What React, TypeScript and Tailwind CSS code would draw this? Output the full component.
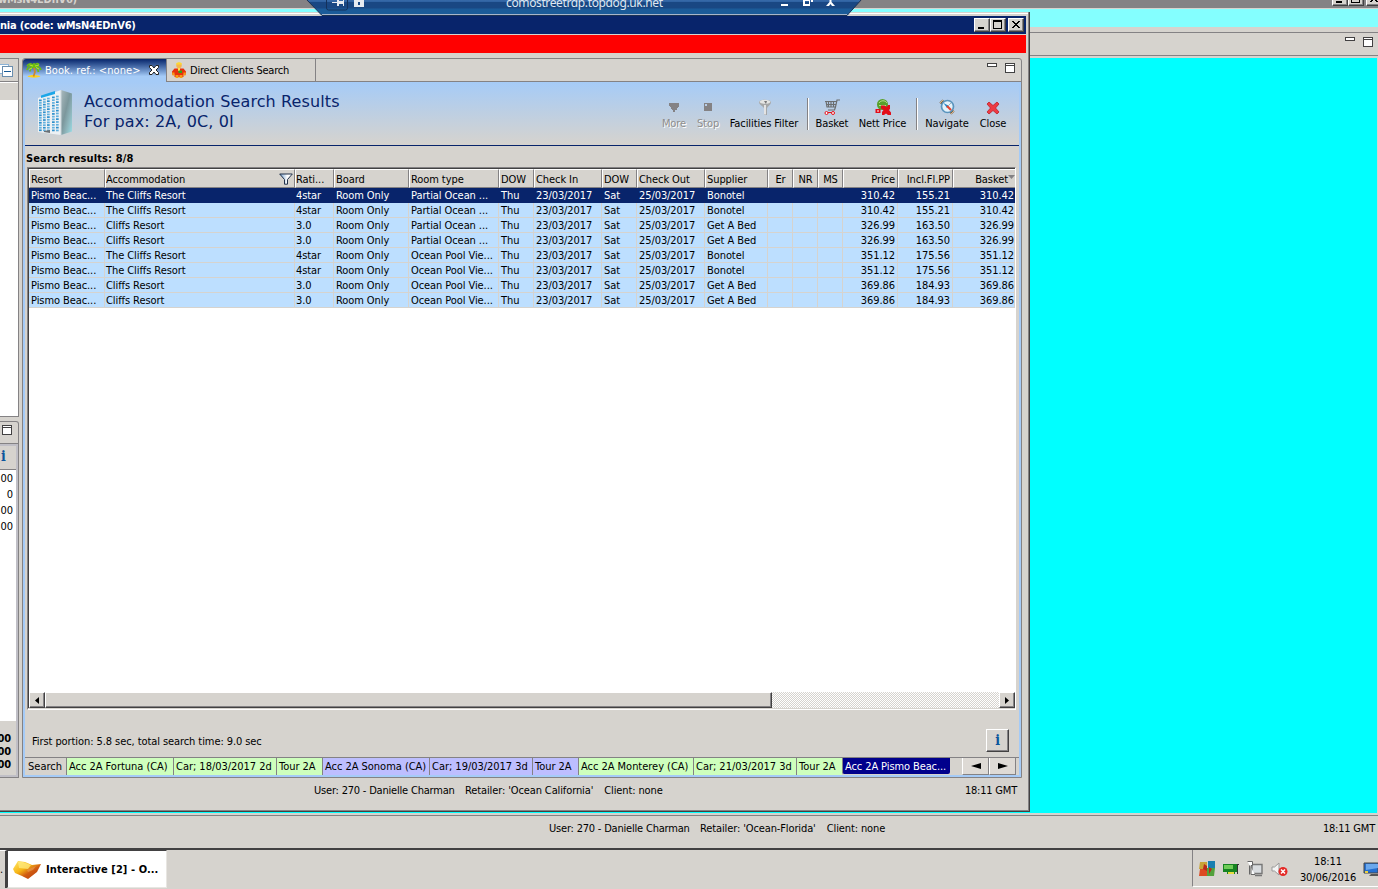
import type { ReactNode } from "react";

const TONE = {
  raised: "border border-t-white border-l-white border-r-[#424142] border-b-[#424142] bg-[#d6d3ce] shadow-[inset_-1px_-1px_0_#848284]",
};

type Column = { label: string; width: string; align?: string; icon?: ReactNode };

function Funnel() {
  return (
    <svg width="14" height="12" viewBox="0 0 14 12" className="-mt-0.5 shrink-0">
      <defs>
        <linearGradient id="fn" x1="0" x2="1">
          <stop offset="0" stopColor="#6f9ccc" />
          <stop offset="0.6" stopColor="#fff" />
        </linearGradient>
      </defs>
      <path d="M.7 1h12.6L8.5 6.5v4.7h-3V6.5z" fill="url(#fn)" stroke="#21304a" />
    </svg>
  );
}

const COLUMNS: Column[] = [
  { label: "Resort", width: "w-[76px]" },
  { label: "Accommodation", width: "w-[190px]", icon: <Funnel /> },
  { label: "Rati...", width: "w-[39px]" },
  { label: "Board", width: "w-[75px]" },
  { label: "Room type", width: "w-[90px]" },
  { label: "DOW", width: "w-[35px]" },
  { label: "Check In", width: "w-[68px]" },
  { label: "DOW", width: "w-[35px]" },
  { label: "Check Out", width: "w-[68px]" },
  { label: "Supplier", width: "w-[63px]" },
  { label: "Er", width: "w-[25px]", align: "justify-center" },
  { label: "NR", width: "w-[25px]", align: "justify-center" },
  { label: "MS", width: "w-[25px]", align: "justify-center" },
  { label: "Price", width: "w-[55px]", align: "justify-end" },
  { label: "Incl.Fl.PP", width: "w-[55px]", align: "justify-end" },
  { label: "Basket", width: "w-[62px]", align: "justify-end" },
];

const row = (hotel: string, rating: string, room: string, supplier: string, price: string, pp: string) => [
  "Pismo Beac...", hotel, rating, "Room Only", room, "Thu", "23/03/2017", "Sat", "25/03/2017", supplier, "", "", "", price, pp, price,
];

const ROWS = [
  row("The Cliffs Resort", "4star", "Partial Ocean ...", "Bonotel", "310.42", "155.21"),
  row("The Cliffs Resort", "4star", "Partial Ocean ...", "Bonotel", "310.42", "155.21"),
  row("Cliffs Resort", "3.0", "Partial Ocean ...", "Get A Bed", "326.99", "163.50"),
  row("Cliffs Resort", "3.0", "Partial Ocean ...", "Get A Bed", "326.99", "163.50"),
  row("The Cliffs Resort", "4star", "Ocean Pool Vie...", "Bonotel", "351.12", "175.56"),
  row("The Cliffs Resort", "4star", "Ocean Pool Vie...", "Bonotel", "351.12", "175.56"),
  row("Cliffs Resort", "3.0", "Ocean Pool Vie...", "Get A Bed", "369.86", "184.93"),
  row("Cliffs Resort", "3.0", "Ocean Pool Vie...", "Get A Bed", "369.86", "184.93"),
];

const PAGE_TABS = [
  { label: "Search", style: "w-[41px] bg-[#d6d3ce]" },
  { label: "Acc 2A Fortuna (CA)", style: "w-[107px] bg-[#ceffbd]" },
  { label: "Car; 18/03/2017 2d", style: "w-[103px] bg-[#ceffbd]" },
  { label: "Tour 2A", style: "w-[46px] bg-[#ceffbd]" },
  { label: "Acc 2A Sonoma (CA)", style: "w-[107px] bg-[#bdbeff]" },
  { label: "Car; 19/03/2017 3d", style: "w-[103px] bg-[#bdbeff]" },
  { label: "Tour 2A", style: "w-[46px] bg-[#bdbeff]" },
  { label: "Acc 2A Monterey (CA)", style: "w-[115px] bg-[#ceffbd]" },
  { label: "Car; 21/03/2017 3d", style: "w-[103px] bg-[#ceffbd]" },
  { label: "Tour 2A", style: "w-[46px] bg-[#ceffbd]" },
];

function MinMax() {
  return (
    <svg width="28" height="12" viewBox="0 0 28 12" shapeRendering="crispEdges">
      <path d="M.5 1.5h9v3h-9zM18.500 1.500h9v9h-9zM18.500 3.500h9" fill="#fff" stroke="#424142" />
    </svg>
  );
}

function WinButton({ kind }: { kind: "min" | "max" | "close" }) {
  return (
    <div className={`flex h-[14px] w-4 items-center justify-center ${TONE.raised}`}>
      <svg width="12" height="10" viewBox="0 0 12 10" shapeRendering="crispEdges">
        {kind === "min" && <path d="M2 7h6v2H2z" />}
        {kind === "max" && <path d="M1 0h9v9H1zM2 2v6h7V2z" fillRule="evenodd" />}
        {kind === "close" && (
          <path d="M2 1h2v1h1v1h2V2h1V1h2v1H9v1H8v1H7v1h1v1h1v1h1v1H8V7H7V6H5v1H4v1H2V7h1V6h1V5h1V4H4V3H3V2H2z" />
        )}
      </svg>
    </div>
  );
}

function Palm() {
  return (
    <svg width="16" height="16" viewBox="0 0 16 16">
      <path d="M1.500 14.500c2-2 10-2 13 0-3 1.500-10 1.500-13 0z" fill="#ffd21a" />
      <path d="M8 5l1 5-1.500 4.500" stroke="#c98a33" strokeWidth="1.800" fill="none" />
      <path d="M8 5C6 1 3 1 1 4M8 5C5 3 2 4 1 8M8 5C5 5 4 7 4 9.500M8 5c1-4 4-4 5-2M8 5c4-2 6 0 7 3M8 5c3 0 4 2 4.500 5M8 5V1" stroke="#6cbc12" strokeWidth="1.700" fill="none" />
      <path d="M7 4L3.500 3M9 4l4-1M6 6L3 7.500M10 5.500l3 1.500" stroke="#b6ea2c" strokeWidth="1" />
    </svg>
  );
}

function Person() {
  return (
    <svg width="16" height="16" viewBox="0 0 16 16">
      <circle cx="8" cy="3.500" r="2.700" fill="#f7b64a" />
      <path d="M5 2.500c0-3 6-3 6 0z" fill="#ffd92e" />
      <path d="M3.500 6.500h9l2.500 3v3h-2.500V15h-9v-2.500H1v-3z" fill="#e7300c" />
      <path d="M7 6h2v3H7z" fill="#ffe14d" />
      <path d="M7.500 8.500h3.500v2.500H7.500z" fill="#31a221" />
      <path d="M1 10.500h2.500v3H1.500zM12.500 10.500H15l-.5 3h-2zM4.500 13h3v3h-3zM8.500 13h3v3h-3z" fill="#f79b18" />
    </svg>
  );
}

function Building() {
  const floors = Array.from({ length: 13 }, (_, i) => i);
  const bays = [2, 6, 10, 15, 19];
  return (
    <svg width="36" height="47" viewBox="0 0 36 47">
      <defs>
        <linearGradient id="side" x1="0" y1="0" x2="1" y2="1">
          <stop offset="0" stopColor="#aab9bd" />
          <stop offset="0.45" stopColor="#7c979c" />
          <stop offset="0.7" stopColor="#8fb6bc" />
          <stop offset="1" stopColor="#9adfe8" />
        </linearGradient>
      </defs>
      <path d="M24 1l11 3.500v38L24 46z" fill="url(#side)" />
      <path d="M1 9L24 1v45L1 43z" fill="#edf1f4" />
      <path d="M4 6.500l14-4.500v3L4 9z" fill="#1ba6e8" />
      {floors.map((i) =>
        bays.map((x, b) => (
          <rect key={`${i}-${b}`} x={x} y={11 - x * 0.23 + i * (2.45 + x * 0.02)} width="2.700" height="1.700" fill={(i + b) % 3 ? "#62b0de" : "#2d8fcb"} />
        )),
      )}
      <path d="M24 1v45" stroke="#cbd6dc" />
      <path d="M7 42l6-1v3l-6-1z" fill="#6a7075" />
    </svg>
  );
}

const ICONS: Record<string, ReactNode> = {
  More: <path d="M3 4h10v4h-1v1h-1v2H9v2H7v-2H6v-1H5V8H4V7H3z" fill="#848284" />,
  Stop: <path d="M4 4h8v8H4zM5 5v2h2V5z" fill="#848284" fillRule="evenodd" />,
  "Facilities Filter": (
    <>
      <path d="M3 3C4 0 14 0 15 3c0 3-3.500 4-4 6.500V16H8V9.500C7.500 7 3 6 3 3z" fill="#a5a7a8" />
      <ellipse cx="9" cy="2.800" rx="5.500" ry="2" fill="#e4e5e4" />
      <path d="M8 2h3l-1 3z" fill="#777" />
      <path d="M9 6v9.500" stroke="#f3f3f3" strokeWidth="1.600" />
    </>
  ),
  Basket: (
    <>
      <path d="M1 2.500h11.500M2 2l1 6h8.500L13 1h3M4.500 3v5M7 3v5M9.500 3v5M2.500 5.500h9.500M11.500 8l-1 3H4" stroke="#6b6d6e" fill="none" strokeWidth="1.200" />
      <circle cx="2.500" cy="14" r="1.500" fill="#fff" stroke="#e71019" />
      <circle cx="9" cy="14" r="1.500" fill="#fff" stroke="#e71019" />
      <path d="M4 13.500h3.500" stroke="#e71019" />
    </>
  ),
  "Nett Price": (
    <>
      <circle cx="7.500" cy="5.500" r="5.500" fill="#58a02a" />
      <path d="M4 4c2-3 6-3 8 0M4 6.500h7" stroke="#b5db8c" fill="none" />
      <path d="M.5 10h5v4h-5zM6 6.500h3.500l2 1.500L13 6h2v4l-1 1 2 2.500V16h-3l-2-1.500L9 16H7v-3l1.500-2L6 9.500z" fill="#e20d18" />
      <path d="M2 12h2" stroke="#fff" />
    </>
  ),
  Navigate: (
    <>
      <path d="M2 2l12 12" stroke="#7d6344" strokeWidth="4.500" />
      <path d="M1 4l3-3M12 15l3-3" stroke="#d9b98e" strokeWidth="1" />
      <circle cx="8.500" cy="7.500" r="6" fill="#e3f2fb" stroke="#5a94bd" strokeWidth="1.700" />
      <path d="M4.500 4l5.500 3-2 2z" fill="#1c83c6" />
      <path d="M8 7l4 4" stroke="#e7412c" strokeWidth="2.200" />
      <path d="M12 4L9 7" stroke="#9db4c2" />
    </>
  ),
  Close: <path d="M2 5l2-2 4 3.500L12 3l2 2-3.500 4 3.500 4-2 2-4-3.500L4 15l-2-2 3.500-4z" fill="#ee3b43" stroke="#bd2029" strokeWidth=".8" />,
};

function Tool({ label, width, disabled }: { label: string; width: string; disabled?: boolean }) {
  return (
    <div className={`flex shrink-0 flex-col items-center ${width}`}>
      <svg width="16" height="16" viewBox="0 0 16 16" className="mt-px">{ICONS[label]}</svg>
      <span className={`mt-[2px] h-[14px] leading-[14px] ${disabled ? "text-[#8e8d8c] [text-shadow:1px_1px_0_#fff]" : ""}`}>{label}</span>
    </div>
  );
}

function Separator() {
  return <div className="h-8 w-0.5 shrink-0 border-l border-[#848284] bg-white" />;
}

function InfoGlyph() {
  return <span className="font-['DejaVu_Serif'] text-[14px] font-bold leading-none text-[#0c559c]">i</span>;
}

function StatusLine({ retailer, className }: { retailer: string; className: string }) {
  return (
    <div className={`flex items-center tracking-[-0.200px] ${className}`}>
      <span className="w-[151px]">User: 270 - Danielle Charman</span>
      <span className="mr-[11px] tracking-[-0.120px]">Retailer: '{retailer}'</span>
      <span className="tracking-[-0.120px]">Client: none</span>
      <span className="ml-auto">18:11 GMT</span>
    </div>
  );
}

function ResultsTable() {
  return (
    <div className="mx-[2px] flex h-[543px] w-[989px] flex-col border border-b-white border-l-[#848284] border-r-white border-t-[#848284] bg-white">
      <div className="flex min-h-0 flex-1 flex-col overflow-hidden border-l border-t border-[#424142]">
        <div className="flex h-[19px] w-[987px] shrink-0 bg-[#d6d3ce]">
          {COLUMNS.map((c, i) => (
            <div
              key={i}
              className={`flex shrink-0 items-center overflow-hidden border-b border-l border-r border-t border-b-[#848284] border-l-white border-r-[#848284] border-t-white pt-[2px] ${i === 0 || i > 2 ? "pl-px" : "pl-0"} ${c.width} ${c.align ?? "justify-between"} ${i > 12 ? "pr-[2px]" : "pr-px"} ${i === 15 ? "!border-r-0 !pr-0" : ""}`}
            >
              <span>{c.label}</span>
              {c.icon}
              {i === 15 && (
                <svg width="7" height="5" viewBox="0 0 7 5" className="mb-1"><path d="M0 0h7L3.500 4z" fill="#848284" /></svg>
              )}
            </div>
          ))}
        </div>
        {ROWS.map((cells, r) => (
          <div key={r} className={`flex h-[15px] w-[987px] shrink-0 ${r === 0 ? "bg-[#08246b] text-white" : "bg-[#bddfff]"}`}>
            {cells.map((cell, i) => (
              <div
                key={i}
                className={`flex shrink-0 items-center overflow-hidden whitespace-nowrap ${i === 0 || i > 2 ? "pl-[2px]" : "pl-px"} ${COLUMNS[i].width} ${i > 12 ? "justify-end" : ""} ${i === 15 ? "pr-px" : "pr-[3px]"} ${r === 0 ? "" : "shadow-[inset_-1px_-1px_0_#d6d3ce]"}`}
              >
                {cell}
              </div>
            ))}
          </div>
        ))}
        <div className="flex-1" />
        <div className="flex h-4 w-[986px] shrink-0 bg-[repeating-conic-gradient(#fff_0_25%,#d6d3ce_0_50%)] bg-[length:2px_2px]">
          <div className={`flex w-4 items-center justify-center ${TONE.raised}`}>
            <svg width="4" height="7" viewBox="0 0 4 7"><path d="M4 0v7L0 3.500z" /></svg>
          </div>
          <div className={`w-[727px] ${TONE.raised}`} />
          <div className={`ml-auto flex w-4 items-center justify-center ${TONE.raised}`}>
            <svg width="4" height="7" viewBox="0 0 4 7"><path d="M0 0v7l4-3.500z" /></svg>
          </div>
        </div>
      </div>
      <div className="h-px shrink-0 bg-[#d6d3ce]" />
    </div>
  );
}

function Editor() {
  return (
    <div className="flex h-[720px] w-[1000px] flex-col rounded-t-[3px] border border-[#848284]">
      <div className="flex h-[23px] shrink-0">
        <div className="flex w-[143px] shrink-0 items-center rounded-tl-[3px] bg-linear-to-b from-[#08246b] to-[#a5cbf7] to-75% pb-px pl-[3px] text-white">
          <Palm />
          <span className="ml-[3px] mt-0.5 tracking-[0.060px]">Book. ref.: &lt;none&gt;</span>
          <svg width="12" height="12" viewBox="0 0 12 12" className="ml-auto mr-[6px]">
            <path d="M1.500 1.500h2.500l2 2.500 2-2.500h2.500v2l-2.500 2.500 2.500 2.500v2H8L6 8l-2 2.500H1.500v-2L4 6 1.500 3.500z" fill="#fff" stroke="#222" />
          </svg>
        </div>
        <div className="flex w-[150px] shrink-0 items-center border-x border-b border-[#848284] pl-[4px]">
          <Person />
          <span className="ml-[3px] mt-0.5 tracking-[-0.220px]">Direct Clients Search</span>
        </div>
        <div className="flex flex-1 items-start justify-end border-b border-[#848284] pr-[6px] pt-[3px]">
          <MinMax />
        </div>
      </div>
      <div className="flex min-h-0 flex-1 flex-col border-x-2 border-b-2 border-[#a5cbf7]">
        <div className="flex h-[64px] shrink-0 border-b border-[#08246b] bg-linear-to-b from-[#a5cbf7] via-[#becfe2] via-50% to-[#d6d3ce] pl-[12px] pt-[7px]">
          <Building />
          <div className="ml-[11px] mt-[3px] flex-1 whitespace-nowrap font-['DejaVu_Sans'] text-[16px] leading-[20px] tracking-[0.110px] text-[#08246b] [font-stretch:normal]">
            <div>Accommodation Search Results</div>
            <div>For pax: 2A, 0C, 0I</div>
          </div>
          <div className="flex pr-[9px] pt-[9px]">
            <Tool label="More" width="w-[34px]" disabled />
            <Tool label="Stop" width="w-[34px]" disabled />
            <Tool label="Facilities Filter" width="w-[78px]" />
            <div className="w-[4px]" />
            <Separator />
            <Tool label="Basket" width="w-[46px]" />
            <Tool label="Nett Price" width="w-[55px]" />
            <div className="w-[6px]" />
            <Separator />
            <Tool label="Navigate" width="w-[58px]" />
            <Tool label="Close" width="w-[34px]" />
          </div>
        </div>
        <div className="h-[21px] shrink-0 pl-px pt-[6px] font-bold leading-[14px] tracking-[0.130px]">Search results: 8/8</div>
        <ResultsTable />
        <div className="flex flex-1 items-center justify-between pl-[7px] pr-[10px] pt-[14px]">
          <span className="mt-[6px]">First portion: 5.8 sec, total search time: 9.0 sec</span>
          <div className={`mt-[2px] flex h-[23px] w-[23px] items-center justify-center ${TONE.raised}`}><InfoGlyph /></div>
        </div>
        <div className="mt-[3px] flex h-[18px] shrink-0 whitespace-nowrap border-t border-[#848284] leading-[17px] tracking-normal">
          {PAGE_TABS.map((t, i) => (
            <div key={i} className={`shrink-0 border-[#848284] ${i ? "border-l pl-[2px] tracking-[-0.030px]" : "pl-[3px]"} ${t.style}`}>{t.label}</div>
          ))}
          <div className="mb-px w-[108px] shrink-0 rounded-b-[2px] border-l border-[#848284] bg-[#00008c] pl-[2px] tracking-[-0.100px] text-white">Acc 2A Pismo Beac...</div>
          <div className="ml-auto flex">
            {["M10 0v6L0 3z", "M0 0v6l10-3z"].map((d) => (
              <div key={d} className="flex w-[27px] items-center justify-center border-b border-l border-r border-[#848284] border-l-white bg-[#dedad5]">
                <svg width="10" height="6" viewBox="0 0 10 6"><path d={d} /></svg>
              </div>
            ))}
            <div className="w-[3px]" />
          </div>
        </div>
      </div>
    </div>
  );
}

function SideColumn() {
  return (
    <div className="flex w-[19px] shrink-0 flex-col">
      <div className="flex h-[359px] flex-col border-b border-r border-t border-[#848284] bg-white">
        <div className="h-[23px] border-b border-[#848284] bg-[#d6d3ce] pt-[5px]">
          <svg width="14" height="14" viewBox="0 0 14 14" shapeRendering="crispEdges">
            <path d="M-2 .5h10.500v9H-2z" fill="#fff" stroke="#8cb3d6" />
            <path d="M2.500 2.500h10v10h-10z" fill="#fff" stroke="#6b8eae" />
            <path d="M4 7.500h7" stroke="#185a94" strokeWidth="1" />
          </svg>
        </div>
        <div className="mt-px h-[17px] bg-[#d6d3ce]" />
      </div>
      <div className="mt-[4px] flex h-[357px] flex-col rounded-tr-[3px] border-b border-r border-t border-[#848284]">
        <div className="h-[22px] border-b border-[#848284] pt-[2px]">
          <svg width="12" height="12" viewBox="0 0 12 12" shapeRendering="crispEdges">
            <path d="M2.500 1.500h9v9h-9zM2.500 3.500h9" fill="#fff" stroke="#424142" />
          </svg>
        </div>
        <div className="flex flex-1 flex-col border-b-2 border-r-2 border-t-2 border-[#c0bfc6]">
          <div className="h-[24px] border-b border-[#848284] pl-[1px] pt-[3px]"><InfoGlyph /></div>
          <div className="flex h-[251px] flex-col items-end bg-white pr-[3px] pt-px leading-[16px]">
            <span>00</span><span>0</span><span>00</span><span>00</span>
          </div>
          <div className="flex flex-col items-end pr-[5px] pt-[11px] font-bold leading-[13px]">
            <span>00</span><span>00</span><span>00</span>
          </div>
        </div>
      </div>
    </div>
  );
}

function ResultsWindow() {
  return (
    <div className="absolute left-0 top-3 flex h-[800px] w-[1030px] flex-col overflow-hidden border-b border-r border-[#424142] bg-[#d6d3ce] shadow-[inset_-1px_-1px_0_#848284]">
      <div className="mt-px h-px w-[1028px] shrink-0 bg-white" />
      <div className="mt-[2px] flex h-[18px] w-[1026px] shrink-0 items-center bg-[#08246b] pr-[2px] font-bold tracking-[-0.200px] text-white">
        <span className="mt-px">nia (code: wMsN4EDnV6)</span>
        <div className="ml-auto flex"><WinButton kind="min" /><WinButton kind="max" /><div className="w-[2px]" /><WinButton kind="close" /></div>
      </div>
      <div className="mt-px h-[18px] w-[1026px] shrink-0 bg-[#ff0000]" />
      <div className="mt-[5px] flex h-[720px] shrink-0 gap-[3px]">
        <SideColumn />
        <Editor />
      </div>
      <StatusLine retailer="Ocean California" className="h-[24px] shrink-0 pl-[314px] pr-[12px] pt-px" />
    </div>
  );
}

function ConnectionBar() {
  return (
    <div className="absolute left-[306px] top-0 h-4 w-[556px]">
      <svg width="556" height="16" viewBox="0 0 556 16" className="absolute inset-0">
        <defs>
          <linearGradient id="bar" x1="0" y1="0" x2="0" y2="1">
            <stop offset="0" stopColor="#3d70ae" />
            <stop offset=".16" stopColor="#2f62a2" />
            <stop offset=".2" stopColor="#194783" />
            <stop offset=".55" stopColor="#194783" />
            <stop offset=".6" stopColor="#1b5b99" />
          </linearGradient>
        </defs>
        <path d="M0-1h556l-15 16.500H16z" fill="url(#bar)" stroke="#1b3153" />
        <path d="M16 14.500h525" stroke="#a7b5cb" />
        <path d="M20.500 0v8q0 2 2 2h17q2 0 2-2V0" fill="none" stroke="#14315b" />
        <path d="M26 2h5V0h2v1h4V0h1v6h-1V4h-4v2h-2V3h-5zM48 0h10v7H48zM52 2v3h2V2z" fill="#e6eaf0" fillRule="evenodd" />
        <path d="M475 4h7v2h-7zM497 0h7v6h-7zM499 1v3h4V1zM505 0h2v2h-2z" fill="#fff" fillRule="evenodd" />
        <path d="M520 6l3.500-4V0h2v2l3.500 4h-3l-1.500-2-1.500 2z" fill="#fff" />
      </svg>
      <div className="relative -mt-[5px] pl-[200px] font-['Noto_Sans'] text-[12px] leading-[15px] tracking-[-0.370px] text-[#dfe7f1] [font-stretch:normal]">comostreetrdp.topdog.uk.net</div>
    </div>
  );
}

function Taskbar() {
  return (
    <div className="flex h-[39px] shrink-0 items-start justify-between">
      <div className="flex h-[38px]">
        <div className="w-[7px] border-r-2 border-t border-[#424142] border-t-white pt-3">.</div>
        <div className="flex w-[160px] items-center border border-b-[#e8e6e2] border-l-[#424142] border-r-[#e8e6e2] border-t-[#424142] bg-white pl-[5px] pt-px font-bold">
          <svg width="28" height="20" viewBox="0 0 28 20">
            <defs>
              <linearGradient id="gem" x1="0" y1="0" x2="1" y2="1">
                <stop offset="0" stopColor="#ffe96b" /><stop offset=".4" stopColor="#f6b515" /><stop offset=".62" stopColor="#d05a12" /><stop offset="1" stopColor="#b33a08" />
              </linearGradient>
            </defs>
            <path d="M0 9l5-8 7 1 7 3 9-1-4 8-9 7-6-3-7-3z" fill="url(#gem)" />
            <path d="M5 2l5 0 8 3-3 4-9-1z" fill="#ffee86" opacity=".7" />
            <path d="M14 10l9-4-3 4-5 2z" fill="#e89a57" opacity=".6" />
          </svg>
          <span className="ml-[5px] tracking-[0.080px]">Interactive [2] - O...</span>
        </div>
      </div>
      <div className="flex h-[37px] w-[186px] items-center border-b border-l border-b-white border-l-[#848284] pl-[6px] pt-[2px]">
        <svg width="92" height="18" viewBox="0 0 92 18">
          <path d="M1 2h7v7H0z" fill="#c9a437" /><path d="M9 1h7v7H9z" fill="#197fb0" /><path d="M1 9h7v7H0z" fill="#dc4922" /><path d="M8 8h8l-1 8H8z" fill="#52a13b" /><path d="M5 4l3 2v5l-4-2zM10 7l3 2-3 5z" fill="#b8291b" />
          <path d="M24 4h14v8H24zM28 12h8v2h-8z" fill="#168321" /><path d="M25 5h9v4h-9z" fill="#70cc58" /><path d="M29 12h6v2h-6z" fill="#e8dc42" /><path d="M38.500 4v10M38 4.500h2" stroke="#333" />
          <path d="M53 4.500h10v9H53zM56 15.500h7" fill="#d9dcdf" stroke="#777" strokeWidth="1.400" /><path d="M48.500 1.500h5v4h-1.500v9h4M50.500 5.500v9" fill="#fff" stroke="#666" />
          <path d="M73 7h2.500l4.500-4v12l-4.500-4H73z" fill="#f4f4f4" stroke="#999" /><circle cx="84" cy="11.500" r="4.500" fill="#e42a27" /><path d="M82 9.500l4 4m0-4l-4 4" stroke="#fff" strokeWidth="1.500" />
        </svg>
        <div className="ml-[8px] mt-[2px] w-[58px] text-center leading-[16px]">18:11<br />30/06/2016</div>
        <svg width="15" height="14" viewBox="0 0 15 14" className="ml-auto">
          <path d="M1 1h14v10H1z" fill="#246fd2" stroke="#444" /><path d="M3 2h12v4l-12 2z" fill="#6ba8ed" /><path d="M2 9h3v2H2z" fill="#ead044" /><path d="M8 12h7v2H6z" fill="#555" />
        </svg>
      </div>
    </div>
  );
}

export default function App() {
  return (
    <div className="relative flex h-[889px] w-[1378px] flex-col overflow-hidden whitespace-nowrap bg-[#d6d3ce] font-['DejaVu_Sans_Condensed','DejaVu_Sans',sans-serif] text-[11px] leading-[14px] tracking-[-0.080px] text-black [font-stretch:condensed]">
      <div className="flex h-2 shrink-0 justify-between bg-[#848284]">
        <span className="-ml-[2px] -mt-[7px] font-bold tracking-[-0.200px] text-[#d6d3ce]">wMsN4EDnV6)</span>
        <div className="-mt-2 flex"><WinButton kind="min" /><WinButton kind="max" /><div className="w-[2px]" /><div className="w-3 overflow-hidden"><WinButton kind="close" /></div></div>
      </div>
      <div className="mt-px h-[18px] shrink-0 bg-[#84ffff]" />
      <div className="mt-[5px] flex h-[24px] shrink-0 justify-end border-y border-[#848284] pr-[5px] pt-[3px]"><MinMax /></div>
      <div className="mr-px mt-[2px] h-[755px] shrink-0 bg-[#00ffff]" />
      <StatusLine retailer="Ocean-Florida" className="mt-[2px] h-[35px] shrink-0 border-b-2 border-t border-b-[#424142] border-t-[#848284] pb-[7px] pl-[549px] pr-[3px]" />
      <Taskbar />
      <ResultsWindow />
      <ConnectionBar />
    </div>
  );
}
